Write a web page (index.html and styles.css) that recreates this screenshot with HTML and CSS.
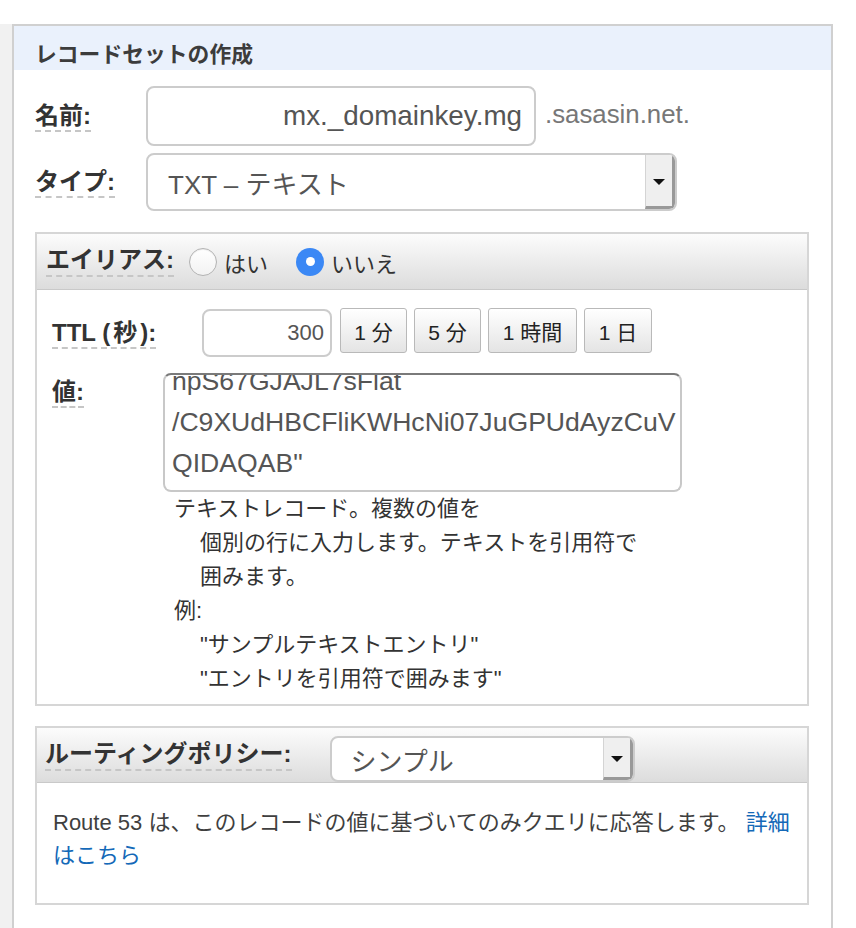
FILE: index.html
```html
<!DOCTYPE html>
<html lang="ja">
<head>
<meta charset="utf-8">
<title>レコードセットの作成</title>
<link rel="stylesheet" href="styles.css">
</head>
<body>
<div class="page">
  <div class="side"></div>
  <div class="panel">
    <div class="panel-title">レコードセットの作成</div>
    <div class="panel-body">
      <div class="row row-name">
        <div class="label-col"><span class="help-label">名前:</span></div>
        <div class="field name-field">mx._domainkey.mg</div>
        <span class="suffix">.sasasin.net.</span>
      </div>
      <div class="row row-type">
        <div class="label-col"><span class="help-label">タイプ:</span></div>
        <div class="select type-select">
          <span class="select-value">TXT – テキスト</span>
          <span class="select-arrow"><span class="tri"></span></span>
        </div>
      </div>

      <div class="box alias-box">
        <div class="box-head">
          <span class="help-label">エイリアス:</span>
          <span class="radio"></span><span class="radio-text">はい</span>
          <span class="radio checked"></span><span class="radio-text">いいえ</span>
        </div>
        <div class="box-body">
          <div class="ttl-row">
            <div class="ttl-label-col"><span class="help-label">TTL (<span class="paren">秒</span>):</span></div>
            <div class="field ttl-field">300</div>
            <div class="ttl-buttons">
              <span class="btn w67">1 分</span>
              <span class="btn w67">5 分</span>
              <span class="btn w89">1 時間</span>
              <span class="btn w68">1 日</span>
            </div>
          </div>
          <div class="value-row">
            <div class="value-label-col"><span class="help-label">値:</span></div>
            <div class="textarea">
              <div class="textarea-content">
                <div>npS67GJAJL7sFlat</div>
                <div>/C9XUdHBCFliKWHcNi07JuGPUdAyzCuV</div>
                <div>QIDAQAB"</div>
              </div>
            </div>
          </div>
          <div class="help">
            <div>テキストレコード。複数の値を</div>
            <div class="indent">個別の行に入力します。テキストを引用符で</div>
            <div class="indent">囲みます。</div>
            <div>例:</div>
            <div class="indent">"サンプルテキストエントリ"</div>
            <div class="indent">"エントリを引用符で囲みます"</div>
          </div>
        </div>
      </div>

      <div class="box routing-box">
        <div class="box-head routing-head">
          <span class="help-label">ルーティングポリシー:</span>
          <div class="select routing-select">
            <span class="select-value">シンプル</span>
            <span class="select-arrow"><span class="tri"></span></span>
          </div>
        </div>
        <div class="routing-body">
          Route 53 は、このレコードの値に基づいてのみクエリに応答します。 <a class="link" href="#">詳細<br>はこちら</a>
        </div>
      </div>
    </div>
  </div>
</div>
</body>
</html>
```

FILE: styles.css
```css
* {
  box-sizing: border-box;
}

html, body {
  margin: 0;
  padding: 0;
  background: #ffffff;
}

body {
  font-family: "Liberation Sans", "Noto Sans CJK JP", sans-serif;
  color: #3a3a3a;
}

.page {
  display: flex;
  align-items: stretch;
  padding-top: 24px;
  min-height: 928px;
  width: 856px;
  overflow: hidden;
}

.side {
  width: 12px;
  flex: none;
  background: #f1f1f1;
}

.panel {
  width: 821px;
  flex: none;
  border: 2px solid #d0d0d0;
  border-bottom: none;
  background: #ffffff;
}

.panel-title {
  height: 44px;
  background: #eaf1fc;
  padding: 16px 0 0 21px;
  font-size: 21.8px;
  line-height: 26px;
  font-weight: bold;
  color: #3c3c3c;
}

.panel-body {
  padding: 16px 22px 0 21px;
}

.help-label {
  font-weight: bold;
  font-size: 24px;
  line-height: 28px;
  color: #333333;
  border-bottom: 2px dashed #c6c6c6;
  padding-bottom: 1px;
  white-space: nowrap;
}

.paren {
  margin: 0 3px;
}

.row {
  display: flex;
  align-items: center;
}

.label-col {
  width: 111px;
  flex: none;
}

.row-name {
  height: 60px;
  margin-bottom: 7px;
}

.row-type {
  height: 58px;
}

.field {
  border: 2px solid #cccccc;
  border-radius: 8px;
  background: #ffffff;
  color: #555555;
  white-space: nowrap;
  overflow: hidden;
}

.name-field {
  width: 390px;
  height: 60px;
  font-size: 27.8px;
  line-height: 56px;
  text-align: right;
  padding-right: 12px;
}

.suffix {
  margin-left: 9px;
  font-size: 25.8px;
  color: #777777;
  margin-top: -3px;
}

.select {
  display: flex;
  align-items: stretch;
  border: 2px solid #cccccc;
  border-radius: 8px;
  background: #ffffff;
  overflow: hidden;
}

.select-value {
  flex: 1;
  font-size: 26px;
  color: #555555;
  display: flex;
  align-items: center;
  white-space: nowrap;
}

.select-arrow {
  width: 30px;
  flex: none;
  background: #efefef;
  border-left: 1px solid #d4d4d4;
  border-right: 3px solid #999999;
  border-bottom: 3px solid #999999;
  display: flex;
  align-items: center;
  justify-content: center;
}

.tri {
  width: 0;
  height: 0;
  border-left: 6px solid transparent;
  border-right: 6px solid transparent;
  border-top: 6px solid #111111;
  margin-top: 2px;
}

.type-select {
  width: 531px;
  height: 58px;
}

.type-select .select-value {
  padding-left: 20px;
}

.box {
  border: 2px solid #d6d6d6;
}

.alias-box {
  margin-top: 21px;
}

.box-head {
  display: flex;
  align-items: center;
  height: 56px;
  padding-left: 9px;
  background: linear-gradient(#fcfcfc, #dcdcdc);
  border-bottom: 1px solid #c9c9c9;
}

.radio {
  width: 28px;
  height: 28px;
  border-radius: 50%;
  border: 1px solid #b3b3b3;
  background: linear-gradient(#ffffff, #f2f2f2);
  box-shadow: inset 0 1px 1px rgba(0, 0, 0, 0.08);
  margin-left: 15px;
  flex: none;
  display: flex;
  align-items: center;
  justify-content: center;
}

.radio.checked {
  margin-left: 28px;
  border: none;
  background: #3b88f5;
  box-shadow: none;
}

.radio.checked::after {
  content: "";
  width: 9px;
  height: 9px;
  border-radius: 50%;
  background: #ffffff;
}

.radio-text {
  margin-left: 7px;
  font-size: 22px;
  color: #333333;
}

.box-body {
  padding: 19px 15px 8px 15px;
}

.ttl-row {
  display: flex;
  align-items: center;
}

.ttl-label-col {
  width: 150px;
  flex: none;
}

.ttl-field {
  width: 130px;
  height: 48px;
  font-size: 22px;
  line-height: 44px;
  text-align: right;
  padding-right: 6px;
}

.ttl-buttons {
  display: flex;
  gap: 7px;
  margin-left: 8px;
  margin-top: -5px;
}

.btn {
  display: flex;
  align-items: center;
  justify-content: center;
  height: 45px;
  border: 1px solid #b9b9b9;
  border-radius: 3px;
  background: linear-gradient(#ffffff, #e4e4e4);
  font-size: 21px;
  color: #222222;
  white-space: nowrap;
}

.w67 { width: 67px; }
.w68 { width: 68px; }
.w89 { width: 89px; }

.value-row {
  display: flex;
  align-items: flex-start;
  margin-top: 16px;
}

.value-label-col {
  width: 111px;
  flex: none;
  padding-top: 5px;
}

.textarea {
  width: 519px;
  height: 119px;
  border: 2px solid #c8c8c8;
  border-top-color: #7a7a7a;
  border-radius: 8px;
  overflow: hidden;
}

.textarea-content {
  margin-top: -14px;
  padding-left: 7px;
  font-size: 26.6px;
  line-height: 41px;
  color: #555555;
  white-space: nowrap;
}

.help {
  margin-left: 122px;
  font-size: 22px;
  line-height: 34px;
  color: #333333;
}

.help .indent {
  padding-left: 26px;
}

.routing-box {
  margin-top: 20px;
}

.routing-head {
  padding-left: 8px;
  height: 55px;
  align-items: flex-end;
}

.routing-head .help-label {
  align-self: center;
}

.routing-select {
  width: 305px;
  height: 46px;
  margin-left: 38px;
}

.routing-select .select-value {
  padding-left: 19px;
}

.routing-body {
  padding: 23px 10px 31px 16px;
  font-size: 22px;
  line-height: 33px;
  color: #3f3f3f;
}

.link {
  color: #1469b8;
  text-decoration: none;
}
```
